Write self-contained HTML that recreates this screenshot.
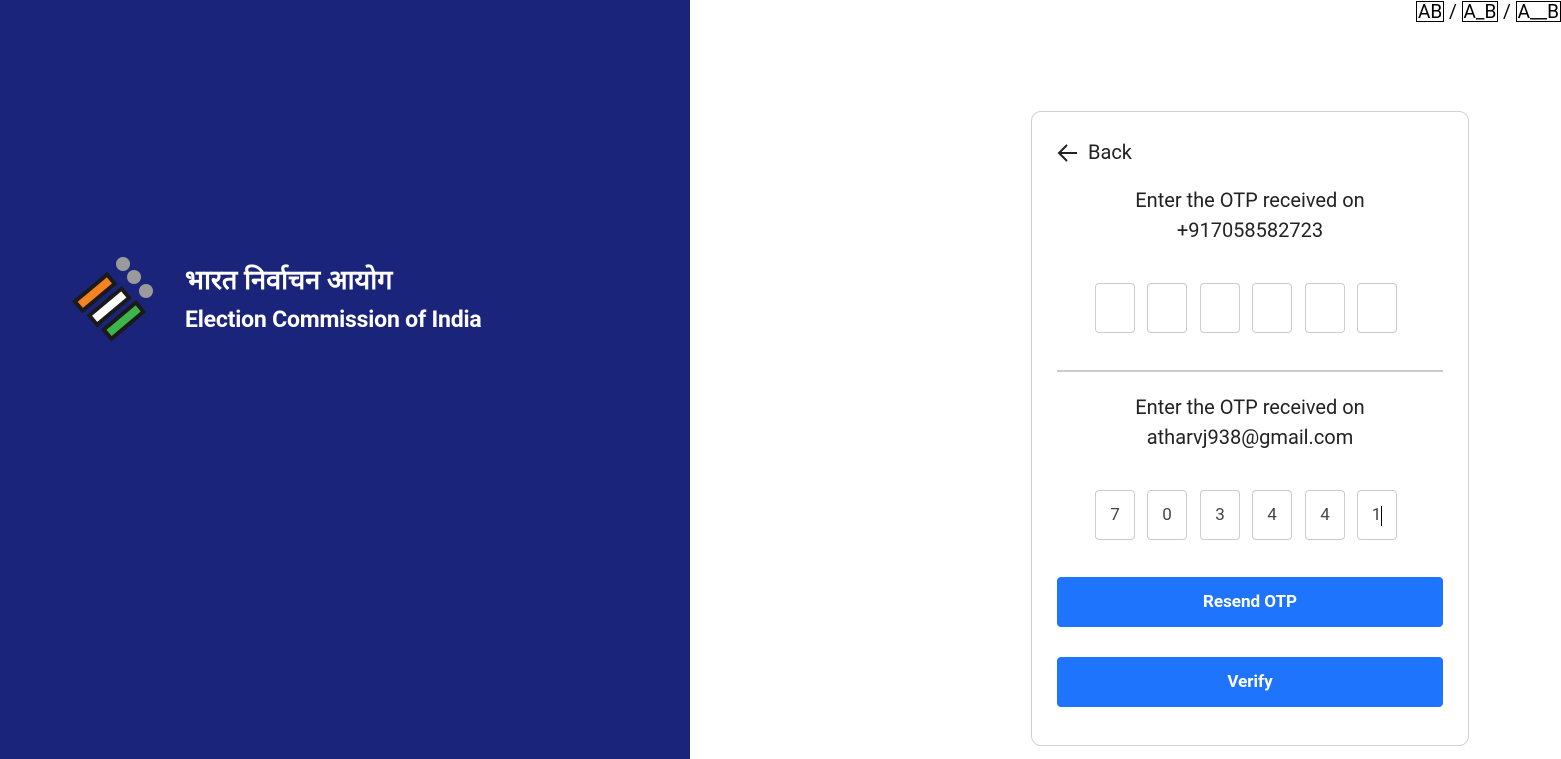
<!DOCTYPE html>
<html><head><meta charset="utf-8"><style>
*{box-sizing:border-box;margin:0;padding:0}
body{width:1561px;height:759px;position:relative;background:#fff;font-family:"Roboto","Liberation Sans",sans-serif;overflow:hidden}
.left{position:absolute;left:0;top:0;width:690px;height:759px;background:#1a247b}
.hi{position:absolute;left:185px;top:260px;color:#fff;font-size:27px;font-weight:bold}
.en{position:absolute;left:185px;top:306px;color:#fff;font-size:23px;font-weight:bold;letter-spacing:-0.2px}
.top{position:absolute;top:0;left:1416px;font-size:19px;color:#000;white-space:nowrap}
.top span{border:1px solid #000;padding:0 1px;line-height:19px;display:inline-block}
.card{position:absolute;left:1031px;top:111px;width:438px;height:635px;border:1px solid #d0d0d0;border-radius:10px}
.t{position:absolute;left:0;width:100%;text-align:center;font-size:20px;color:#222;line-height:30px}
.box{position:absolute;width:40px;height:50px;border:1px solid #ccc;border-radius:4px;font-size:17px;color:#444;text-align:center;line-height:48px}
.btn{position:absolute;left:25px;width:386px;height:50px;background:#1f74fd;border-radius:4px;color:#fff;font-weight:bold;font-size:17px;text-align:center;line-height:50px}
</style></head><body>
<div class="left">
<svg style="position:absolute;left:68px;top:250px" width="100" height="95" viewBox="0 0 100 95">
<g transform="translate(8,2) rotate(-40 45 50)">
<rect x="8" y="18" width="46" height="16" fill="#1a1a1a"/><rect x="12" y="22" width="38" height="8" fill="#f58220"/>
<rect x="10" y="38" width="46" height="16" fill="#1a1a1a"/><rect x="14" y="42" width="38" height="8" fill="#fff"/>
<rect x="12" y="58" width="46" height="16" fill="#1a1a1a"/><rect x="16" y="62" width="38" height="8" fill="#3db54a"/>
</g>
<circle cx="55" cy="14" r="7" fill="#9a9a9a"/><circle cx="66" cy="27" r="7" fill="#9a9a9a"/><circle cx="78" cy="41" r="7" fill="#9a9a9a"/>
</svg>
<div class="hi">भारत निर्वाचन आयोग</div>
<div class="en">Election Commission of India</div>
</div>
<div class="top"><span>AB</span> / <span>A_B</span> / <span>A__B</span></div>
<div class="card">
<svg style="position:absolute;left:25px;top:30px" width="22" height="22" viewBox="0 0 22 22"><path d="M20 11H3M10 3L2 11l8 8" stroke="#222" stroke-width="2" fill="none"/></svg>
<div style="position:absolute;left:56px;top:28px;font-size:20px;color:#222">Back</div>
<div class="t" style="top:73px">Enter the OTP received on<br>+917058582723</div>
<div class="box" style="left:63px;top:171px"></div><div class="box" style="left:115px;top:171px"></div><div class="box" style="left:168px;top:171px"></div><div class="box" style="left:220px;top:171px"></div><div class="box" style="left:273px;top:171px"></div><div class="box" style="left:325px;top:171px"></div>
<div style="position:absolute;left:25px;top:258px;width:386px;height:2px;background:#ccc"></div>
<div class="t" style="top:280px">Enter the OTP received on<br>atharvj938@gmail.com</div>
<div class="box" style="left:63px;top:378px">7</div><div class="box" style="left:115px;top:378px">0</div><div class="box" style="left:168px;top:378px">3</div><div class="box" style="left:220px;top:378px">4</div><div class="box" style="left:273px;top:378px">4</div><div class="box" style="left:325px;top:378px">1<span style="display:inline-block;width:1px;height:20px;background:#000;vertical-align:middle"></span></div>
<div class="btn" style="top:465px">Resend OTP</div>
<div class="btn" style="top:545px">Verify</div>
</div>
</body></html>
